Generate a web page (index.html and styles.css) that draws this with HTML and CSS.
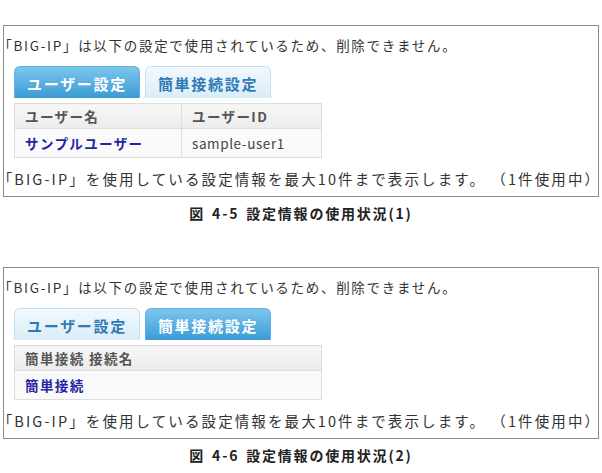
FILE: index.html
```html
<!DOCTYPE html>
<html lang="ja">
<head>
<meta charset="utf-8">
<link rel="stylesheet" href="styles.css">
</head>
<body>
<section class="figure">
  <div class="panel">
    <p class="msg"><span class="ob">「</span>BIG-IP」は以下の設定で使用されているため、削除できません。</p>
    <div class="tabs">
      <div class="tab active">ユーザー設定</div>
      <div class="tab">簡単接続設定</div>
    </div>
    <table class="list">
      <thead>
        <tr><th class="c1">ユーザー名</th><th class="c2">ユーザーID</th></tr>
      </thead>
      <tbody>
        <tr><td class="c1 link">サンプルユーザー</td><td class="c2 plain">sample-user1</td></tr>
      </tbody>
    </table>
    <p class="note"><span class="ob">「</span>BIG-IP」を使用している設定情報を最大10件まで表示します。 （1件使用中）</p>
  </div>
  <p class="caption">図 4-5 設定情報の使用状況(1)</p>
</section>

<section class="figure second">
  <div class="panel">
    <p class="msg"><span class="ob">「</span>BIG-IP」は以下の設定で使用されているため、削除できません。</p>
    <div class="tabs">
      <div class="tab">ユーザー設定</div>
      <div class="tab active">簡単接続設定</div>
    </div>
    <table class="list">
      <thead>
        <tr><th class="wide">簡単接続 接続名</th></tr>
      </thead>
      <tbody>
        <tr><td class="wide link">簡単接続</td></tr>
      </tbody>
    </table>
    <p class="note"><span class="ob">「</span>BIG-IP」を使用している設定情報を最大10件まで表示します。 （1件使用中）</p>
  </div>
  <p class="caption">図 4-6 設定情報の使用状況(2)</p>
</section>
</body>
</html>
```

FILE: styles.css
```css
html, body {
  margin: 0;
  padding: 0;
  background: #ffffff;
}
body {
  font-family: "Noto Sans CJK JP", "Noto Sans", sans-serif;
  color: #333333;
  width: 602px;
}
.figure {
  padding-top: 25px;
}
.figure.second {
  padding-top: 44px;
}
.panel {
  margin-left: 3px;
  width: 594px;
  border: 1px solid #8c8c8c;
  padding: 9px 0 6px 0;
}
.msg {
  margin: 0;
  font-size: 13.5px;
  letter-spacing: 1.7px;
  line-height: 20px;
  height: 20px;
  padding-left: 1px;
  white-space: nowrap;
}
.ob {
  font-feature-settings: "halt";
}
.tabs {
  display: flex;
  gap: 5px;
  margin: 11px 0 0 10px;
  height: 32px;
}
.tab {
  width: 126px;
  box-sizing: border-box;
  height: 32px;
  border-radius: 6px 6px 0 0;
  border: 1px solid #c4def0;
  border-bottom: none;
  background: linear-gradient(#f3f9fd, #d9ecf8);
  color: #2f7bb6;
  font-weight: bold;
  font-size: 15px;
  letter-spacing: 1.7px;
  display: flex;
  align-items: center;
  justify-content: center;
  padding-top: 2px;
}
.tab.active {
  border-color: #5eb1e0;
  background: linear-gradient(#7cc6ec, #3c9bd6);
  color: #ffffff;
}
.list {
  margin: 5px 0 0 10px;
  border-collapse: collapse;
  width: 308px;
  font-size: 13.5px;
  letter-spacing: 1.4px;
}
.list th, .list td {
  border: 1px solid #dddddd;
  text-align: left;
  padding: 0 0 0 10px;
  white-space: nowrap;
}
.list th {
  height: 24px;
  background: linear-gradient(#f7f7f7, #ececec);
  color: #555555;
  font-weight: bold;
}
.list td {
  height: 28px;
  background: #fafafa;
}
.c1 {
  width: 156px;
}
.link {
  color: #2323a3;
  font-weight: bold;
}
.plain {
  color: #444444;
  letter-spacing: 0.6px;
}
.note {
  margin: 10px 0 0 0;
  font-size: 14.5px;
  letter-spacing: 2.1px;
  line-height: 22px;
  padding-left: 1px;
  white-space: nowrap;
}
.caption {
  margin: 6px 0 0 0;
  text-align: center;
  font-size: 14px;
  line-height: 20px;
  font-weight: bold;
  color: #222222;
  letter-spacing: 1.8px;
  word-spacing: 2px;
}
```
